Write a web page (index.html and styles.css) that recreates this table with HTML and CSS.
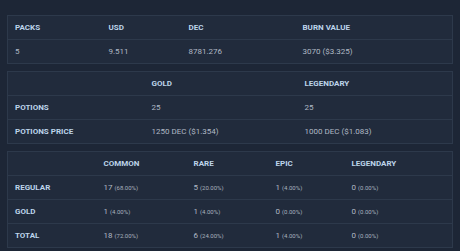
FILE: index.html
```html
<!DOCTYPE html>
<html>
<head>
<meta charset="utf-8">
<link rel="stylesheet" href="styles.css">
</head>
<body>
<div class="stack">
  <table class="tbl t1">
    <colgroup><col style="width:94px"><col style="width:80px"><col style="width:114px"><col></colgroup>
    <tr class="head"><th>PACKS</th><th>USD</th><th>DEC</th><th>BURN VALUE</th></tr>
    <tr><td>5</td><td>9.511</td><td>8781.276</td><td>3070 ($3.325)</td></tr>
  </table>
  <table class="tbl t2">
    <colgroup><col style="width:137px"><col style="width:153px"><col></colgroup>
    <tr class="head"><th></th><th>GOLD</th><th>LEGENDARY</th></tr>
    <tr><th>POTIONS</th><td>25</td><td>25</td></tr>
    <tr><th>POTIONS PRICE</th><td>1250 DEC ($1.354)</td><td>1000 DEC ($1.083)</td></tr>
  </table>
  <table class="tbl t3">
    <colgroup><col style="width:89px"><col style="width:90px"><col style="width:82px"><col style="width:76px"><col></colgroup>
    <tr class="head"><th></th><th>COMMON</th><th>RARE</th><th>EPIC</th><th>LEGENDARY</th></tr>
    <tr><th>REGULAR</th><td>17 <small>(68.00%)</small></td><td>5 <small>(20.00%)</small></td><td>1 <small>(4.00%)</small></td><td>0 <small>(0.00%)</small></td></tr>
    <tr><th>GOLD</th><td>1 <small>(4.00%)</small></td><td>1 <small>(4.00%)</small></td><td>0 <small>(0.00%)</small></td><td>0 <small>(0.00%)</small></td></tr>
    <tr><th>TOTAL</th><td>18 <small>(72.00%)</small></td><td>6 <small>(24.00%)</small></td><td>1 <small>(4.00%)</small></td><td>0 <small>(0.00%)</small></td></tr>
  </table>
</div>
</body>
</html>
```
FILE: styles.css
```css
html, body {
  margin: 0;
  padding: 0;
  background: #1d2636;
}
body {
  font-family: Roboto, "Liberation Sans", sans-serif;
  width: 460px;
  height: 251px;
  overflow: hidden;
}
.stack {
  display: flex;
  flex-direction: column;
  gap: 7px;
  padding: 15px 7px 0 7px;
}
.tbl {
  width: 446px;
  border-collapse: collapse;
  table-layout: fixed;
  background: #212b3c;
  border: 1px solid #2d394b;
}
.tbl tr {
  height: 24px;
}
.tbl tr + tr {
  border-top: 1px solid #2d394b;
}
.tbl th, .tbl td {
  padding: 0 0 0 7px;
  text-align: left;
  vertical-align: middle;
  white-space: nowrap;
}
.tbl th {
  font-weight: 700;
  font-size: 8px;
  color: #bdd4ea;
}
.tbl td {
  font-weight: 400;
  font-size: 8px;
  color: #b0b9c5;
}
.tbl td small {
  font-size: 6px;
  color: #a8b1bd;
}
```
